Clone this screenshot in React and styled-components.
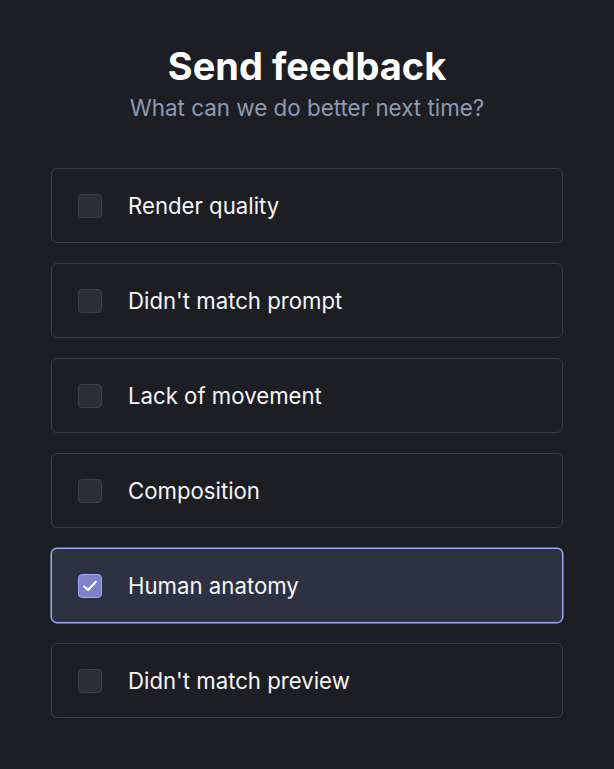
import React, { useState } from "react";
import styled, { createGlobalStyle } from "styled-components";

const GlobalStyle = createGlobalStyle`
  html, body {
    margin: 0;
    padding: 0;
    background: #1d1e23;
  }
  body {
    font-family: Inter, "Noto Sans", sans-serif;
    -webkit-font-smoothing: antialiased;
  }
`;

const Page = styled.div`
  width: 614px;
  min-height: 769px;
  box-sizing: border-box;
  padding: 43px 51px 0;
  background: #1d1e23;
  display: flex;
  flex-direction: column;
`;

const Header = styled.header`
  display: flex;
  flex-direction: column;
  align-items: center;
  gap: 5px;
  margin-bottom: 46px;
`;

const Title = styled.h1`
  margin: 0;
  font-size: 38px;
  line-height: 46px;
  font-weight: 700;
  color: #ffffff;
`;

const Subtitle = styled.p`
  margin: 0;
  font-size: 22.4px;
  line-height: 28px;
  font-weight: 400;
  color: #8e9ab2;
`;

const List = styled.div`
  display: flex;
  flex-direction: column;
  gap: 20px;
`;

const Option = styled.label`
  display: flex;
  align-items: center;
  gap: 26px;
  height: 75px;
  box-sizing: border-box;
  padding: 0 26px;
  border-radius: 6px;
  border: 1px solid ${(p) => (p.checked ? "#a0a8f5" : "#3c3e45")};
  box-shadow: ${(p) => (p.checked ? "0 0 0 0.5px #a0a8f5" : "none")};
  background: ${(p) => (p.checked ? "#2e3142" : "#1d1e23")};
  cursor: pointer;
`;

const Box = styled.span`
  width: 24px;
  height: 24px;
  box-sizing: border-box;
  border-radius: 4px;
  border: 1px solid ${(p) => (p.checked ? "#a1a7f2" : "#3d4047")};
  background: ${(p) => (p.checked ? "#7c81c9" : "#2a2d32")};
  display: flex;
  align-items: center;
  justify-content: center;
  flex-shrink: 0;
`;

const Label = styled.span`
  font-size: 22.2px;
  color: #f4f5f7;
  font-weight: 400;
`;

const options = [
  "Render quality",
  "Didn't match prompt",
  "Lack of movement",
  "Composition",
  "Human anatomy",
  "Didn't match preview",
];

const App = () => {
  const [selected, setSelected] = useState(["Human anatomy"]);

  const toggle = (o) =>
    setSelected((s) => (s.includes(o) ? s.filter((x) => x !== o) : [...s, o]));

  return (
    <>
      <GlobalStyle />
      <Page>
        <Header>
          <Title>Send feedback</Title>
          <Subtitle>What can we do better next time?</Subtitle>
        </Header>
        <List>
          {options.map((o) => {
            const on = selected.includes(o);
            return (
              <Option key={o} checked={on} onClick={() => toggle(o)}>
                <Box checked={on}>
                  {on && (
                    <svg width="16" height="16" viewBox="0 0 16 16">
                      <path
                        d="M2.3 8.6 L6 12 L13.7 3.9"
                        fill="none"
                        stroke="#ffffff"
                        strokeWidth="2.2"
                        strokeLinecap="round"
                        strokeLinejoin="round"
                      />
                    </svg>
                  )}
                </Box>
                <Label>{o}</Label>
              </Option>
            );
          })}
        </List>
      </Page>
    </>
  );
};

export default App;
